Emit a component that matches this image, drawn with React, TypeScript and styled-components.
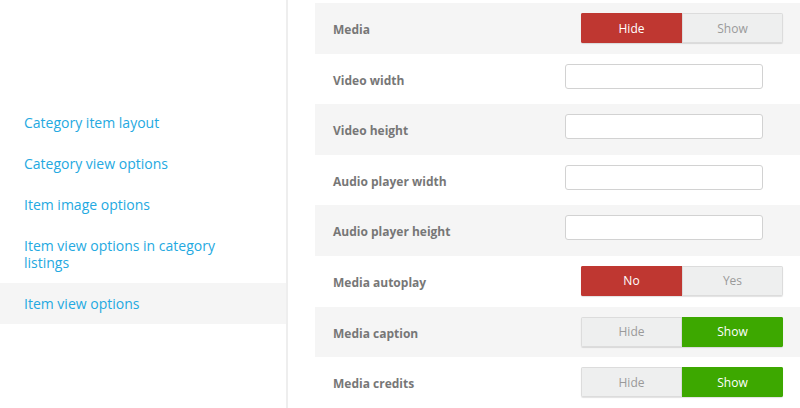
import React from "react";
import styled, { createGlobalStyle } from "styled-components";

const GlobalStyle = createGlobalStyle`
  html, body { margin: 0; padding: 0; background: #fff; }
  body { font-family: "Open Sans", "Liberation Sans", sans-serif; overflow: hidden; }
`;

const Page = styled.div`
  display: flex;
  width: 800px;
  height: 408px;
  overflow: hidden;
`;

const Sidebar = styled.nav`
  flex: 0 0 288px;
  border-right: 2px solid #eeeeee;
  padding-top: 102px;
  box-sizing: border-box;
`;

const NavItem = styled.a<{ $active?: boolean }>`
  display: block;
  padding: 12px 30px 12px 24px;
  font-size: 14px;
  line-height: 17px;
  color: #24a9e1;
  text-decoration: none;
  background: ${(p) => (p.$active ? "#f5f5f5" : "transparent")};
`;

const Content = styled.div`
  flex: 1;
  padding: 3px 0 0 27px;
  min-width: 0;
`;

const Row = styled.div<{ $shaded?: boolean }>`
  display: grid;
  grid-template-columns: 232px 1fr;
  height: 50.6px;
  padding: 10px 0 0 18px;
  box-sizing: border-box;
  background: ${(p) => (p.$shaded ? "#f5f5f5" : "#fff")};
`;

const Label = styled.div`
  font-size: 12px;
  font-weight: 700;
  color: #777;
  line-height: 30px;
  height: 30px;
  padding-top: 2px;
`;

const TextInput = styled.input`
  width: 198px;
  height: 25px;
  box-sizing: border-box;
  border: 1px solid #d2d2d2;
  border-radius: 3px;
  background: #fff;
  padding: 0 6px;
  font-family: inherit;
  outline: none;
`;

const Toggle = styled.div`
  display: flex;
  width: 202px;
  height: 30px;
  margin-left: 16px;
  box-shadow: 0 1px 1px rgba(0, 0, 0, 0.12);
  border-radius: 2px;
  overflow: hidden;
`;

type Tone = "red" | "green" | "off";

const toneBg: Record<Tone, string> = {
  red: "#bf3731",
  green: "#3da800",
  off: "#eeefef",
};

const ToggleBtn = styled.button<{ $tone: Tone }>`
  flex: 1;
  height: 30px;
  margin: 0;
  padding: 0;
  font-family: inherit;
  font-size: 12px;
  color: ${(p) => (p.$tone === "off" ? "#9a9a9a" : "#fff")};
  background: ${(p) => toneBg[p.$tone]};
  border: 1px solid ${(p) => (p.$tone === "off" ? "#dcdcdc" : toneBg[p.$tone])};
  cursor: pointer;
`;

type RowDef =
  | { label: string; kind: "input" }
  | { label: string; kind: "toggle"; options: [string, string]; active: 0 | 1; color: "red" | "green" }
  | { label: string; kind: "empty" };

const rows: RowDef[] = [
  { label: "Media", kind: "toggle", options: ["Hide", "Show"], active: 0, color: "red" },
  { label: "Video width", kind: "input" },
  { label: "Video height", kind: "input" },
  { label: "Audio player width", kind: "input" },
  { label: "Audio player height", kind: "input" },
  { label: "Media autoplay", kind: "toggle", options: ["No", "Yes"], active: 0, color: "red" },
  { label: "Media caption", kind: "toggle", options: ["Hide", "Show"], active: 1, color: "green" },
  { label: "Media credits", kind: "toggle", options: ["Hide", "Show"], active: 1, color: "green" },
  { label: "", kind: "empty" },
];

const navItems = [
  "Category item layout",
  "Category view options",
  "Item image options",
  "Item view options in category listings",
  "Item view options",
];

export default function App() {
  return (
    <>
      <GlobalStyle />
      <Page>
        <Sidebar>
          {navItems.map((n, i) => (
            <NavItem key={n} href="#" $active={i === navItems.length - 1}>
              {n}
            </NavItem>
          ))}
        </Sidebar>
        <Content>
          {rows.map((r, i) => (
            <Row key={i} $shaded={i % 2 === 0}>
              <Label>{r.label}</Label>
              <div>
                {r.kind === "input" ? (
                  <TextInput type="text" />
                ) : r.kind === "toggle" ? (
                  <Toggle>
                    {r.options.map((o, j) => (
                      <ToggleBtn key={o} $tone={j === r.active ? r.color : "off"}>
                        {o}
                      </ToggleBtn>
                    ))}
                  </Toggle>
                ) : null}
              </div>
            </Row>
          ))}
        </Content>
      </Page>
    </>
  );
}
